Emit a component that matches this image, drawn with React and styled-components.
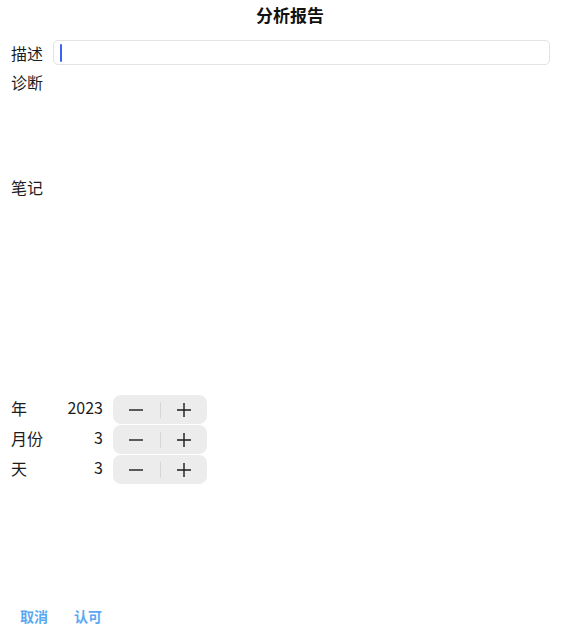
import React, { useState } from 'react'
import styled, { createGlobalStyle } from 'styled-components'

const GlobalStyle = createGlobalStyle`
  body {
    margin: 0;
    background: #ffffff;
    font-family: "Noto Sans CJK SC", "Noto Sans", sans-serif;
    color: #1c1c1e;
  }
`

const Stepper = ({ value, onChange }) => (
  <StepperBox>
    <StepButton onClick={() => onChange(value - 1)} aria-label="minus">
      <svg width="16" height="16" viewBox="0 0 16 16">
        <path d="M1 8h14" stroke="#1c1c1e" strokeWidth="1.4" />
      </svg>
    </StepButton>
    <Divider />
    <StepButton onClick={() => onChange(value + 1)} aria-label="plus">
      <svg width="16" height="16" viewBox="0 0 16 16">
        <path d="M1 8h14M8 1v14" stroke="#1c1c1e" strokeWidth="1.4" />
      </svg>
    </StepButton>
  </StepperBox>
)

const App = () => {
  const [year, setYear] = useState(2023)
  const [month, setMonth] = useState(3)
  const [day, setDay] = useState(3)
  const [desc, setDesc] = useState('')

  return (
    <Page>
      <GlobalStyle />
      <Title>分析报告</Title>

      <FieldRow>
        <Label>描述</Label>
        <InputBox>
          <Caret />
          <Input value={desc} onChange={e => setDesc(e.target.value)} />
        </InputBox>
      </FieldRow>

      <AreaRow $height={105}>
        <Label>诊断</Label>
      </AreaRow>

      <AreaRow $height={225}>
        <Label>笔记</Label>
      </AreaRow>

      <DateList>
        <DateRow>
          <DateLabel>年</DateLabel>
          <Value>{year}</Value>
          <Stepper value={year} onChange={setYear} />
        </DateRow>
        <DateRow>
          <DateLabel>月份</DateLabel>
          <Value>{month}</Value>
          <Stepper value={month} onChange={setMonth} />
        </DateRow>
        <DateRow>
          <DateLabel>天</DateLabel>
          <Value>{day}</Value>
          <Stepper value={day} onChange={setDay} />
        </DateRow>
      </DateList>

      <Footer>
        <TextButton>取消</TextButton>
        <TextButton>认可</TextButton>
      </Footer>
    </Page>
  )
}

const Page = styled.div`
  height: 640px;
  display: flex;
  flex-direction: column;
  box-sizing: border-box;
  padding: 0 30px 0 11px;
`

const Title = styled.h1`
  margin: 0 -30px 0 -11px;
  height: 30px;
  line-height: 30px;
  text-align: center;
  font-size: 17px;
  font-weight: 700;
  color: #111;
`

const FieldRow = styled.div`
  display: flex;
  align-items: center;
  margin-top: 10px;
`

const Label = styled.span`
  width: 42px;
  flex-shrink: 0;
  font-size: 16px;
  line-height: 22px;
`

const DateLabel = styled(Label)`
  margin-top: -4px;
`

const InputBox = styled.div`
  flex: 1;
  height: 25px;
  box-sizing: border-box;
  border: 1px solid #e3e3e5;
  border-radius: 5px;
  display: flex;
  align-items: center;
  padding-left: 6px;
`

const Caret = styled.span`
  width: 2px;
  height: 18px;
  background: #3c63ef;
  border-radius: 1px;
`

const Input = styled.input`
  flex: 1;
  border: none;
  background: transparent;
  font: inherit;
  font-size: 14px;
  caret-color: transparent;

  &:focus {
    outline: none;
  }
`

const AreaRow = styled.div`
  height: ${props => props.$height}px;
  padding-top: 6px;
  box-sizing: border-box;
  display: flex;
  align-items: flex-start;
`

const DateList = styled.div`
  display: flex;
  flex-direction: column;
  gap: 1px;
`

const DateRow = styled.div`
  display: flex;
  align-items: center;
`

const Value = styled.span`
  width: 50px;
  text-align: right;
  font-size: 16px;
  line-height: 22px;
  margin-right: 10px;
  margin-top: -6px;
`

const StepperBox = styled.div`
  width: 94px;
  height: 29px;
  background: #ececed;
  border-radius: 8px;
  display: flex;
  align-items: center;
`

const StepButton = styled.button`
  flex: 1;
  height: 100%;
  border: none;
  background: transparent;
  padding: 0;
  display: flex;
  align-items: center;
  justify-content: center;
  cursor: pointer;
`

const Divider = styled.span`
  width: 1px;
  height: 16px;
  background: #d6d6d8;
`

const Footer = styled.div`
  margin-top: auto;
  display: flex;
  gap: 26px;
  padding: 0 0 14px 9px;
`

const TextButton = styled.button`
  border: none;
  background: transparent;
  padding: 0;
  font-family: inherit;
  font-size: 14px;
  line-height: 20px;
  font-weight: 700;
  color: #5aa8f4;
  cursor: pointer;
`

export default App
